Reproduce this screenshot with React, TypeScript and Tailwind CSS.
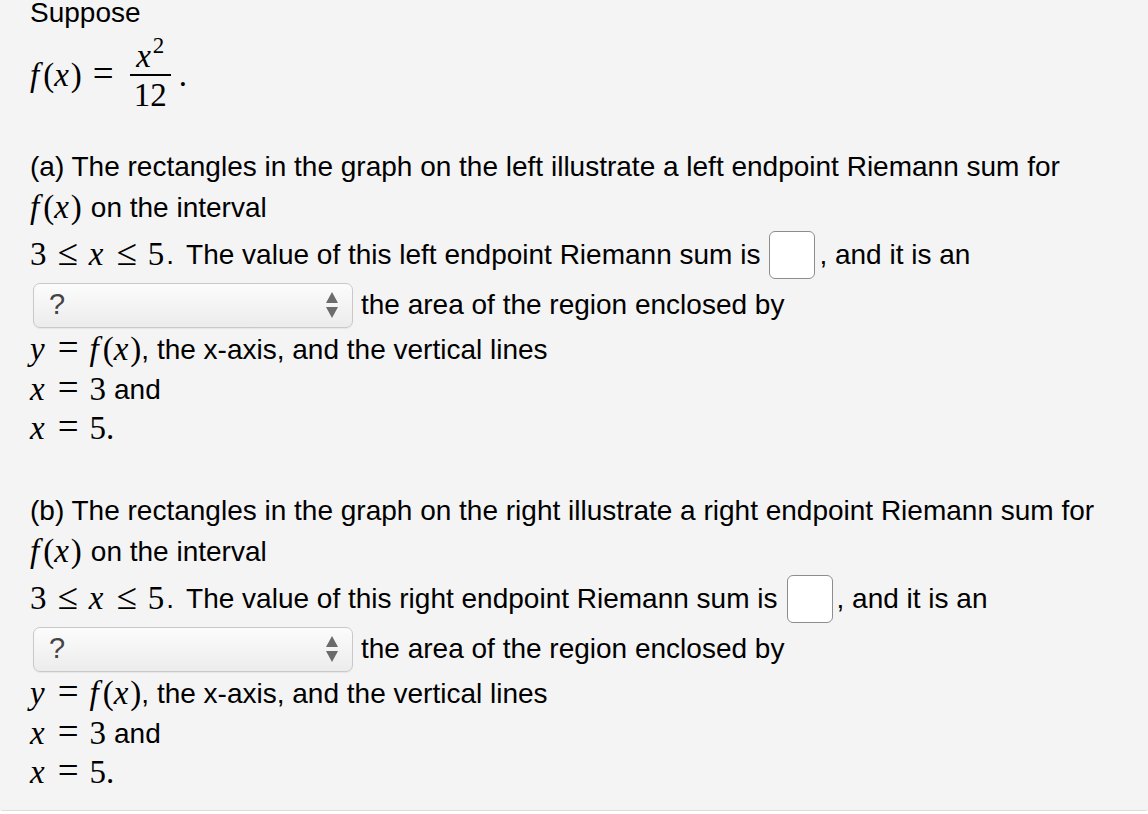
import React from "react";

const serif = "font-['Liberation_Serif','Times_New_Roman',serif]";

const M = ({ children }: { children: React.ReactNode }) => (
  <span className={`${serif} text-[33px] whitespace-nowrap`}>{children}</span>
);

const V = ({ children, r = 2 }: { children: React.ReactNode; r?: number }) => (
  <span className={`italic ${r === 4 ? "mr-[4px]" : "mr-[2px]"}`}>{children}</span>
);

const Rel = ({ children }: { children: React.ReactNode }) => (
  <span className="mx-[11px] text-[37px] leading-[0]">{children}</span>
);

const Fx = () => (
  <>
    <V r={4}>f</V>(<V>x</V>)
  </>
);

const AnswerBox = () => (
  <span className="inline-block w-[46px] h-[48px] ml-[9px] mr-[4px] rounded-[6px] border border-[#8d8d8d] bg-white" />
);

const SelectBox = () => (
  <span className="inline-flex items-center justify-between w-[320px] h-[45px] ml-[3px] mr-[8px] pl-[15px] pr-[14px] rounded-[7px] border border-[#c9c9c9] bg-gradient-to-b from-[#fcfcfc] to-[#ececec] shadow-[0_1px_1px_rgba(0,0,0,0.06)]">
    <span className="text-[#444] text-[29px]">?</span>
    <svg width="12" height="28" viewBox="0 0 12 28">
      <path d="M6 1 L12 12 H0 Z" fill="#6b6b6b" />
      <path d="M6 27 L12 16 H0 Z" fill="#6b6b6b" />
    </svg>
  </span>
);

const Part = ({ letter, side, kind }: { letter: string; side: string; kind: string }) => (
  <div className="flex flex-col">
    <div className="h-[41px] flex items-center whitespace-nowrap">
      ({letter}) The rectangles in the graph on the {side} illustrate a {kind} endpoint Riemann sum for
    </div>
    <div className="h-[42px] flex items-center whitespace-nowrap">
      <M>
        <Fx />
      </M>
      <span className="ml-[9px]">on the interval</span>
    </div>
    <div className="h-[52px] flex items-center whitespace-nowrap">
      <M>
        3<Rel>≤</Rel>
        <V>x</V>
        <Rel>≤</Rel>5
      </M>
      <span className="ml-[2px]">.</span>
      <span className="ml-[12px]">The value of this {kind} endpoint Riemann sum is</span>
      <AnswerBox />
      <span>, and it is an</span>
    </div>
    <div className="h-[48px] flex items-center whitespace-nowrap">
      <SelectBox />
      <span>the area of the region enclosed by</span>
    </div>
    <div className="h-[41px] flex items-center whitespace-nowrap">
      <M>
        <V>y</V>
        <Rel>=</Rel>
        <Fx />
      </M>
      <span>, the x-axis, and the vertical lines</span>
    </div>
    <div className="h-[39px] flex items-center whitespace-nowrap">
      <M>
        <V>x</V>
        <Rel>=</Rel>3
      </M>
      <span className="ml-[8px]">and</span>
    </div>
    <div className="h-[40px] flex items-center whitespace-nowrap">
      <M>
        <V>x</V>
        <Rel>=</Rel>5.
      </M>
    </div>
  </div>
);

export default function App() {
  return (
    <div className="w-[1148px] h-[814px] bg-white overflow-hidden">
      <div className="h-[811px] bg-[#f4f4f4] border-b border-[#dcdcdc] rounded-b-[3px] pl-[30px] text-black text-[28px] font-['Liberation_Sans',Arial,sans-serif]">
        <div className="h-[26px] leading-[26px]">Suppose</div>
        <div className="h-[100px] flex items-center">
          <M>
            <Fx />
            <Rel>=</Rel>
          </M>
          <span className={`${serif} inline-flex flex-col items-center ml-[5px] mr-[8px] text-[33px]`}>
            <span className="leading-[36px] px-[3px] h-[36px]">
              <V>x</V>
              <span className="text-[23px] relative top-[-14px]">2</span>
            </span>
            <span className="w-full h-[1.5px] bg-black" />
            <span className="leading-[38px] px-[4px]">12</span>
          </span>
          <M>.</M>
        </div>
        <div className="h-[20px]" />
        <Part letter="a" side="left" kind="left" />
        <div className="h-[41px]" />
        <Part letter="b" side="right" kind="right" />
      </div>
    </div>
  );
}
